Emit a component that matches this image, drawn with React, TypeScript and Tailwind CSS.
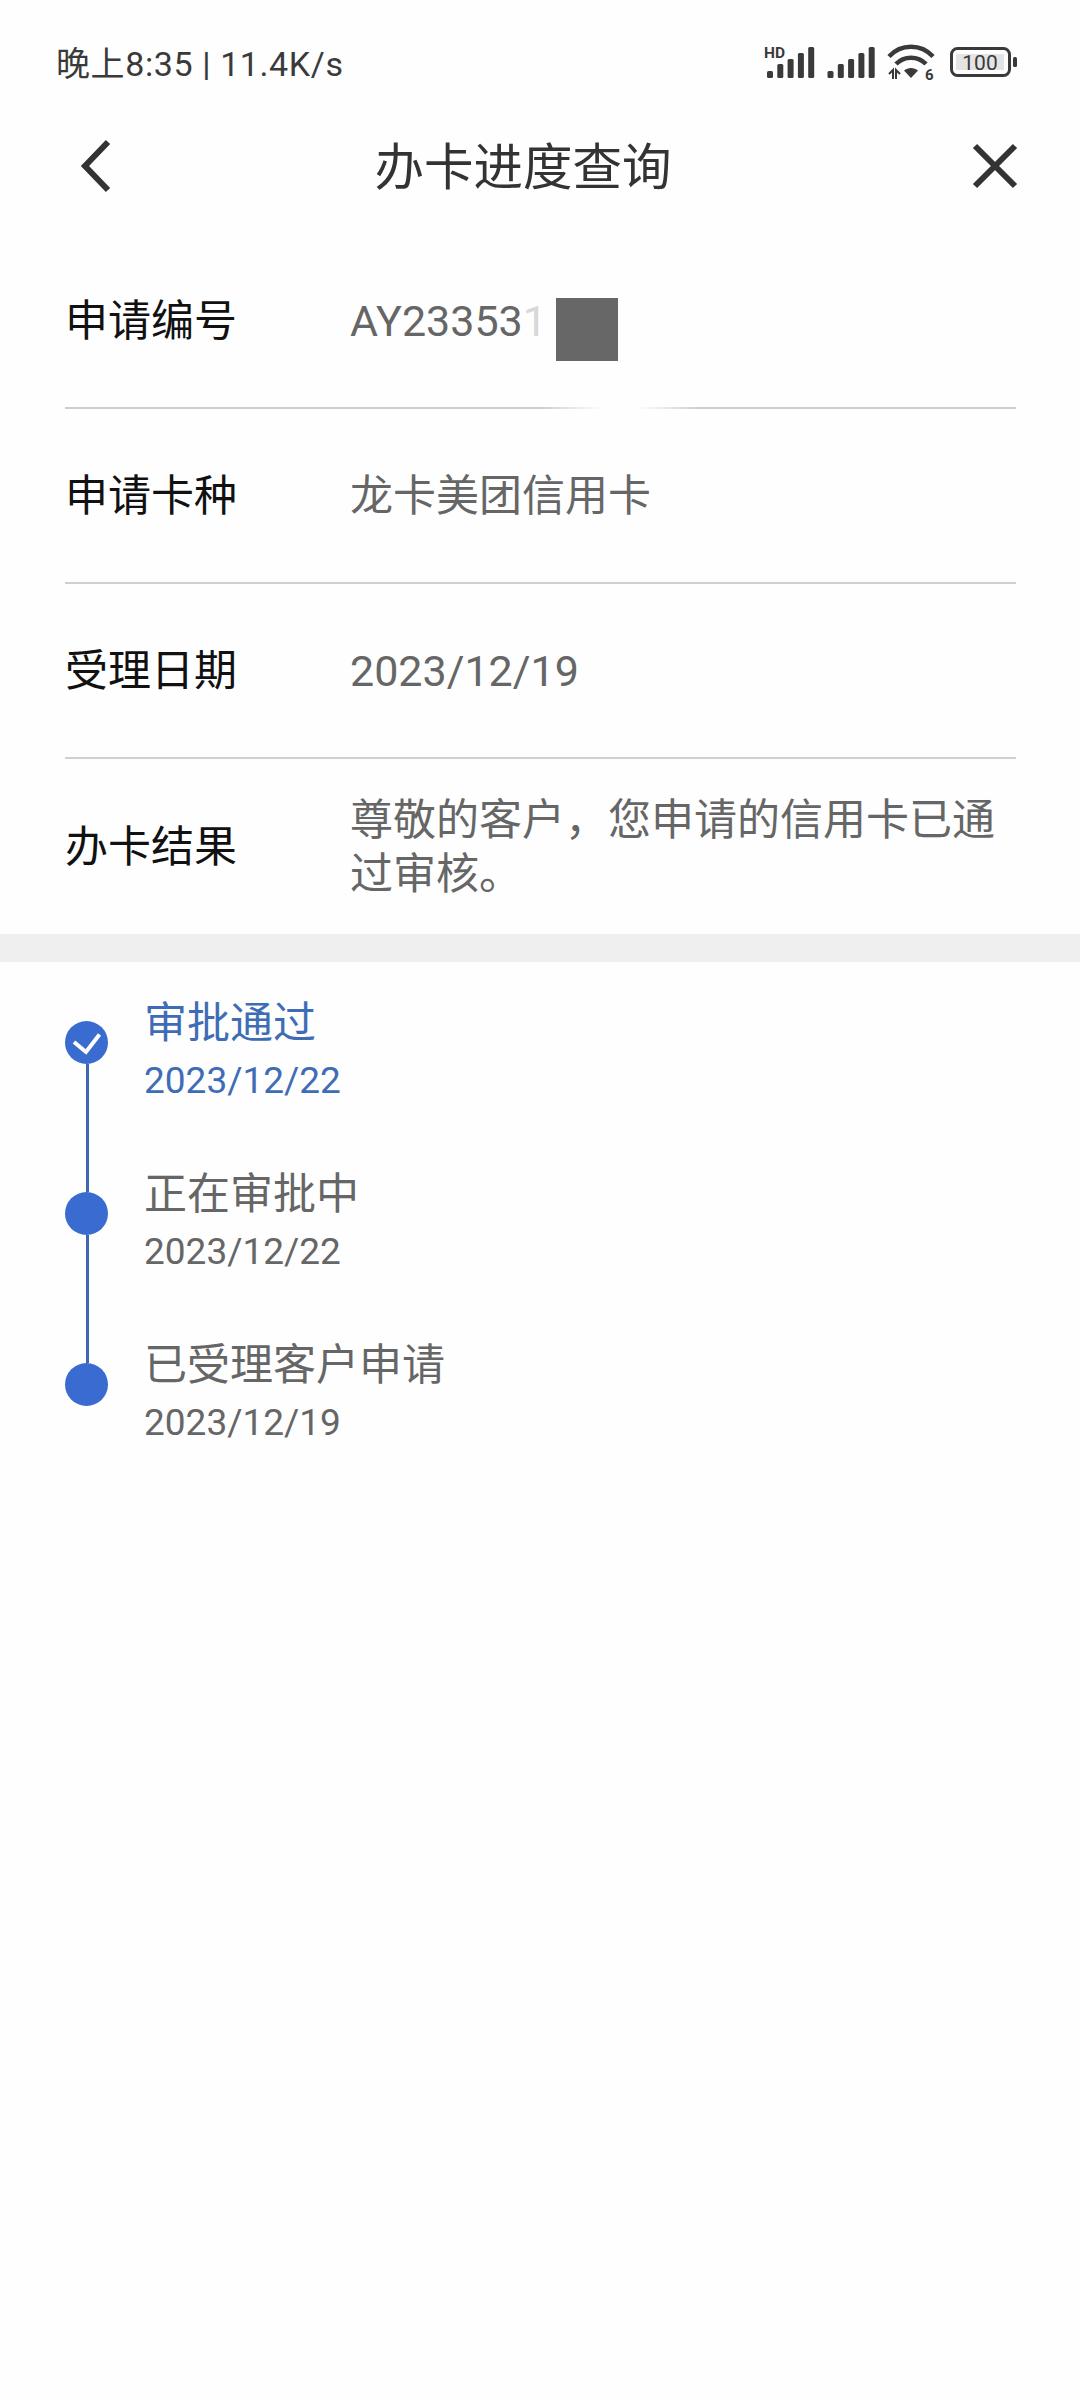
const font = { fontFamily: '"Roboto", "Noto Sans CJK SC", sans-serif' };

function Signal({ x }: { x: number }) {
  const heights = [7, 14, 19, 25, 31];
  return (
    <g>
      {heights.map((h, i) => (
        <rect key={i} x={x + i * 10.3} y={79 - h} width={6} height={h} rx={1.5} fill="#3a3a3a" />
      ))}
    </g>
  );
}

function StatusIcons() {
  return (
    <svg width="260" height="50" viewBox="760 40 260 50" fill="none">
      <text x="764" y="59" fontSize="15.5" fontWeight="700" fill="#3a3a3a" fontFamily="Roboto, sans-serif">HD</text>
      <Signal x={767} />
      <Signal x={827.5} />
      <path d="M889 57.5C901 44.5 921 44.5 933 57.5" stroke="#3a3a3a" strokeWidth="4.5" />
      <path d="M896 65C904 56.5 918 56.5 926 65" stroke="#3a3a3a" strokeWidth="4.5" />
      <path d="M904 71.5C908 68 914 68 918 71.5L911 79Z" fill="#3a3a3a" />
      <path d="M889 75L893 71V80M896 80V71L900 75" stroke="#3a3a3a" strokeWidth="2" />
      <text x="925" y="80.5" fontSize="15" fontWeight="700" fill="#3a3a3a" fontFamily="Roboto, sans-serif">6</text>
      <rect x="951.5" y="49.5" width="58" height="27" rx="6" stroke="#3a3a3a" strokeWidth="3" />
      <rect x="956" y="55" width="48" height="16" fill="#e4e4e4" />
      <text x="980" y="70.5" fontSize="21" textAnchor="middle" fill="#3a3a3a" fontFamily="Roboto, sans-serif">100</text>
      <rect x="1013" y="58" width="4" height="10" rx="1.5" fill="#3a3a3a" />
    </svg>
  );
}

function Row({ label, children, line }: { label: string; children: React.ReactNode; line?: boolean }) {
  return (
    <div className="h-[175px] flex flex-col">
      <div className="flex-1 flex items-center pl-[65px] pr-[60px]">
        <div className="w-[285px] shrink-0 text-[43px] leading-[58px] text-[#111111]">{label}</div>
        <div className="text-[43px] leading-[54px] text-[#666666]">{children}</div>
      </div>
      {line && <div className="h-[2px] ml-[65px] mr-[64px] bg-[#cfcfcf]" />}
    </div>
  );
}

function Step({ title, date, active, last }: { title: string; date: string; active?: boolean; last?: boolean }) {
  return (
    <div className="h-[171px] flex pl-[65px]">
      <div className="w-[43px] flex flex-col items-center shrink-0">
        <div className="w-[43px] h-[43px] rounded-full bg-[#3a6bd0] shrink-0 flex items-center justify-center">
          {active && (
            <svg width="43" height="43" viewBox="0 0 43 43" fill="none">
              <path d="M9 21L21 31L34.5 13.5" stroke="#ffffff" strokeWidth="4" />
            </svg>
          )}
        </div>
        {!last && <div className="w-[3px] flex-1 ml-[2px] bg-[#3d67ae]" />}
      </div>
      <div className="ml-[36px] -mt-[27px]">
        <div className={`text-[43px] leading-[58px] ${active ? "text-[#3f6db5]" : "text-[#666666]"}`}>{title}</div>
        <div className={`text-[37px] leading-[58px] ${active ? "text-[#3f6db5]" : "text-[#666666]"}`}>{date}</div>
      </div>
    </div>
  );
}

export default function App() {
  return (
    <div className="w-[1080px] min-h-[2400px] bg-[#fefefe]" style={font}>
      <div className="h-[128px] flex items-center justify-between pl-[56px] pr-[60px]">
        <span className="text-[34px] tracking-[0.6px] text-[#3a3a3a]">晚上8:35 | 11.4K/s</span>
        <StatusIcons />
      </div>
      <div className="h-[80px] flex items-center pl-[78px] pr-[60px]">
        <svg width="36" height="56" viewBox="0 0 36 56" fill="none" className="shrink-0 -mt-[4px]">
          <path d="M30 4L7 28L30 52" stroke="#333333" strokeWidth="6" />
        </svg>
        <div className="flex-1 text-center pr-[38px] text-[49.5px] leading-[64px] text-[#333333]">办卡进度查询</div>
        <svg width="50" height="50" viewBox="0 0 50 50" fill="none" className="shrink-0 -mt-[4px]">
          <path d="M5 5L45 45M45 5L5 45" stroke="#333333" strokeWidth="6" />
        </svg>
      </div>
      <div className="h-[26px]" />
      <div className="relative">
        <Row label="申请编号" line>
          <span>AY23353<span className="text-[#d8d8d8]">1</span></span>
        </Row>
        <div className="absolute left-[556px] top-[64px] w-[62px] h-[63px] bg-[#676767]" />
        <div className="absolute left-[540px] top-[172px] w-[160px] h-[6px] bg-[linear-gradient(90deg,transparent,#fefefe_40%,#fefefe_60%,transparent)]" />
      </div>
      <Row label="申请卡种" line>龙卡美团信用卡</Row>
      <Row label="受理日期" line>2023/12/19</Row>
      <Row label="办卡结果">
        <div>尊敬的客户，您申请的信用卡已通过审核。</div>
      </Row>
      <div className="h-[28px] bg-[#efefef]" />
      <div className="pt-[59px]">
        <Step title="审批通过" date="2023/12/22" active />
        <Step title="正在审批中" date="2023/12/22" />
        <Step title="已受理客户申请" date="2023/12/19" last />
      </div>
    </div>
  );
}
